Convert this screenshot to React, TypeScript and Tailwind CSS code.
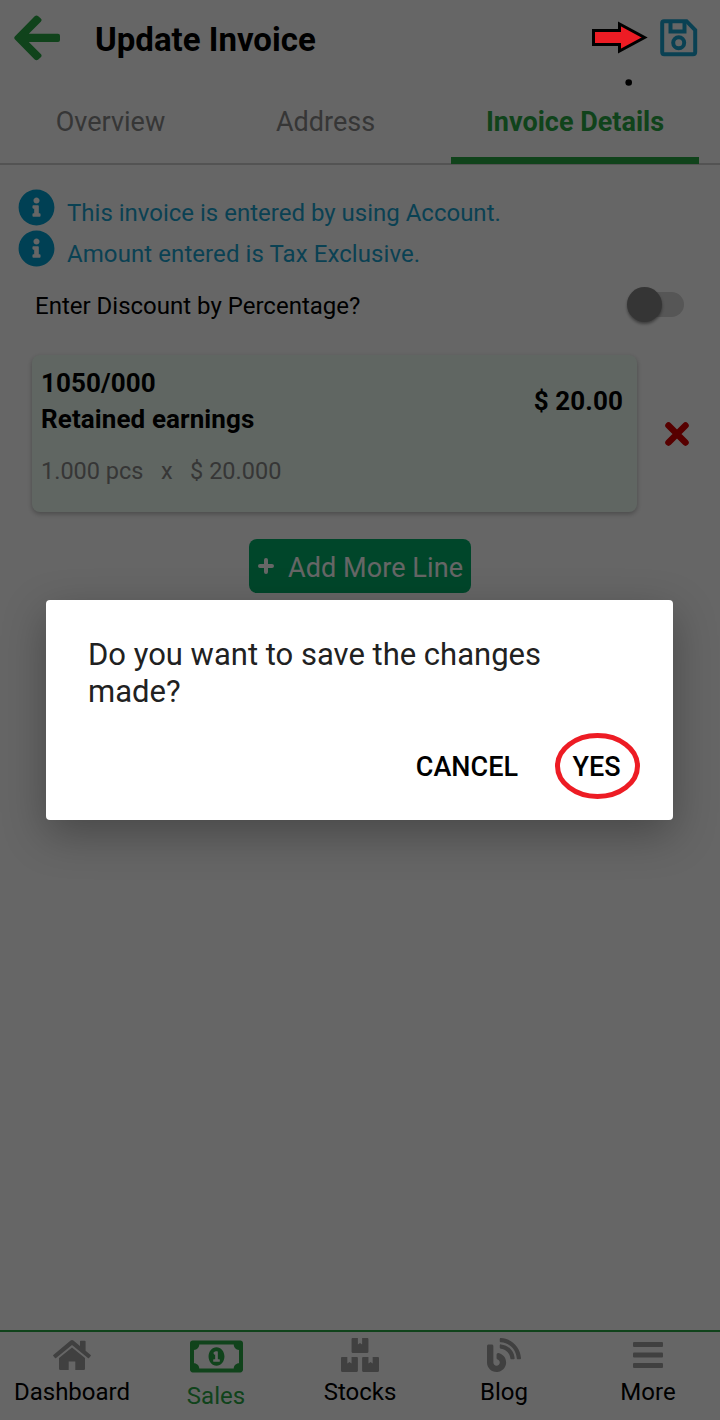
import type { ReactNode } from 'react';
import { FaBlog, FaBoxes, FaInfoCircle, FaRegMoneyBillAlt } from 'react-icons/fa';

function BackArrow() {
  return (
    <svg width="47" height="46" viewBox="0 0 47 46" fill="#28a745">
      <path d="M20.700 1.200 Q22.500 -0.400 24.300 1.200 L26.800 3.400 Q28.400 5 26.800 6.700 L14.800 18.700 H44 Q46 18.700 46 20.700 V25 Q46 27 44 27 H14.800 L26.800 39 Q28.400 40.700 26.800 42.300 L24.300 44.500 Q22.500 46 20.700 44.500 L0.800 24.300 Q-0.300 22.850 0.800 21.400 Z" />
    </svg>
  );
}

function SaveIcon() {
  return (
    <svg width="38" height="38" viewBox="0 0 38 38" fill="none" stroke="#1ba3d0" strokeWidth="4">
      <path d="M4 2.200 H26.500 L35.200 11 V33 Q35.200 35.200 33 35.200 H4.200 Q2.200 35.200 2.200 33 V4 Q2.200 2.200 4 2.200 Z" />
      <path d="M10.500 3 V12.500 H24.500 V3" />
      <circle cx="18.700" cy="23.700" r="5.500" />
    </svg>
  );
}

function HomeIcon() {
  return (
    <svg width="38" height="30" viewBox="0 0 38 30" fill="currentColor">
      <path d="M17.600 0.500 Q19 -0.500 20.400 0.500 L27 6 V1.500 Q27 0.700 27.800 0.700 H31.800 Q32.600 0.700 32.600 1.500 V10.700 L37.700 15 Q38.200 15.500 37.700 16.100 L36 18.100 Q35.500 18.600 34.900 18.100 L19 5 L3.100 18.100 Q2.500 18.600 2 18.100 L0.300 16.100 Q-0.200 15.500 0.300 15 Z" />
      <path d="M19 7.400 L32 18 V28.700 Q32 30 30.700 30 H22.300 V21.500 H15.700 V30 H7.300 Q6 30 6 28.700 V18 Z" />
    </svg>
  );
}

function Info({ children }: { children: ReactNode }) {
  return (
    <div className="flex h-[41px] items-start text-[#1ba3d0]">
      <FaInfoCircle size={37} className="shrink-0 text-[#00a0d2]" />
      <span className="ml-3 mt-[6px] text-[24px] leading-9">{children}</span>
    </div>
  );
}

const navItems = [
  { label: 'Dashboard', icon: <HomeIcon /> },
  { label: 'Sales', icon: <FaRegMoneyBillAlt size={53} />, active: true },
  { label: 'Stocks', icon: <FaBoxes size={38} /> },
  { label: 'Blog', icon: <FaBlog size={34} /> },
  {
    label: 'More',
    icon: (
      <svg width="30" height="28" viewBox="0 0 30 28" fill="currentColor">
        <rect width="30" height="5" y="1" rx="1" />
        <rect width="30" height="5" y="11.500" rx="1" />
        <rect width="30" height="5" y="22" rx="1" />
      </svg>
    ),
  },
];

function InvoiceScreen() {
  return (
    <div className="flex h-full flex-col bg-white">
      <header className="flex h-20 items-center pl-[14px] pr-[22px]">
        <div className="-mt-1">
          <BackArrow />
        </div>
        <h1 className="-mt-px ml-[34px] text-[33px] font-bold">Update Invoice</h1>
        <div className="-mt-1 ml-auto">
          <SaveIcon />
        </div>
      </header>

      <nav className="flex h-[85px] justify-between border-b-2 border-[#d0d0d0] px-[21px] text-[27px] text-[#888]">
        <div className="w-[179px] pt-[22px] text-center">Overview</div>
        <div className="w-[169px] pt-[22px] text-center">Address</div>
        <div className="-mb-[1px] w-[248px] border-b-[7px] border-[#28a745] pt-[22px] text-center font-bold text-[#28a745]">
          Invoice Details
        </div>
      </nav>

      <section className="px-[18px] pt-6">
        <Info>This invoice is entered by using Account.</Info>
        <Info>
          <span className="tracking-[0.08px]">Amount entered is Tax Exclusive.</span>
        </Info>
      </section>

      <div className="mt-[15px] flex h-9 items-center pl-[35px] pr-9 text-[24px]">
        <span className="pt-[3px]">Enter Discount by Percentage?</span>
        <div className="ml-auto flex h-[25px] w-14 items-center rounded-full bg-[#d6d6d6]">
          <span className="-ml-px size-[35px] rounded-full bg-[#858585] shadow-[0_2px_3px_rgba(0,0,0,0.4)]" />
        </div>
      </div>

      <div className="mt-[33px] flex items-center pl-8 pr-[30px]">
        <div className="flex h-[157px] w-[605px] justify-between rounded-lg bg-[#f0fff5] px-[9px] pt-[10px] shadow-[0_2px_5px_rgba(0,0,0,0.28)]">
          <div>
            <p className="text-[26px] font-bold leading-9 tracking-[0.1px]">1050/000</p>
            <p className="text-[26px] font-bold leading-9 tracking-[0.1px]">Retained earnings</p>
            <p className="mt-4 whitespace-pre text-[23.5px] leading-9 text-[#888]">{'1.000 pcs   x   $ 20.000'}</p>
          </div>
          <p className="mr-[5px] mt-[18px] text-[26px] font-bold leading-9 tracking-[0.1px]">$ 20.00</p>
        </div>
        <svg className="ml-auto" width="26" height="26" viewBox="0 0 26 26" stroke="#d90000" strokeWidth="6.500" strokeLinecap="round">
          <path d="M4.500 4.500 L21.500 21.500 M21.500 4.500 L4.500 21.500" />
        </svg>
      </div>

      <button className="mt-[27px] flex h-[54px] w-[222px] items-center self-center rounded-lg bg-[#00b06a] pl-[9px] text-[27px] text-white">
        <svg width="16" height="16" viewBox="0 0 16 16" stroke="currentColor" strokeWidth="4" strokeLinecap="round">
          <path d="M8 2 V14 M2 8 H14" />
        </svg>
        <span className="ml-[14px] whitespace-nowrap pt-[4px] tracking-[0.08px]">Add More Line</span>
      </button>

      <footer className="mt-auto grid h-[90px] grid-cols-5 border-t-2 border-[#28a745] text-[24px]">
        {navItems.map((item) => (
          <div key={item.label} className="flex flex-col items-center">
            <span className={item.active ? 'flex h-[50px] items-center pb-[2px] text-[#28a745]' : 'flex h-[46px] items-center text-[#a0a0a0]'}>
              {item.icon}
            </span>
            <span className={item.active ? 'leading-7 text-[#28a745]' : 'leading-7'}>{item.label}</span>
          </div>
        ))}
      </footer>
    </div>
  );
}

function ConfirmDialog() {
  return (
    <div className="flex h-[220px] w-[627px] flex-col rounded bg-white pl-[42px] pr-[33px] pt-9 shadow-[0_14px_44px_rgba(0,0,0,0.3)]">
      <p className="w-[500px] text-[31px] leading-[37px] text-[#212121]">Do you want to save the changes made?</p>
      <div className="mt-[23px] flex items-center justify-end font-medium">
        <button className="mr-9 pt-px text-[27px]">CANCEL</button>
        <button className="relative h-[67px] w-[86px] pt-px text-[27px]">
          <span className="-ml-px">YES</span>
          <svg className="absolute inset-0" width="86" height="67" viewBox="0 0 86 67" fill="none">
            <ellipse cx="43.500" cy="33" rx="40" ry="30.500" stroke="#ed1c24" strokeWidth="5" />
          </svg>
        </button>
      </div>
    </div>
  );
}

export default function App() {
  return (
    <div className="relative h-[1420px] w-[720px] overflow-hidden font-[Roboto,sans-serif] text-black">
      <InvoiceScreen />
      <div className="absolute inset-0 flex items-center justify-center bg-black/60 pr-[1px]">
        <ConfirmDialog />
      </div>
      <svg className="absolute left-[590px] top-5" width="60" height="70" viewBox="0 0 60 70">
        <path d="M3.500 10.500 H29.500 V4 L54.500 17.500 L29.500 31 V24.500 H3.500 Z" fill="#ed1c24" stroke="#000" strokeWidth="3" />
        <circle cx="38.700" cy="62.500" r="3.300" />
      </svg>
    </div>
  );
}
